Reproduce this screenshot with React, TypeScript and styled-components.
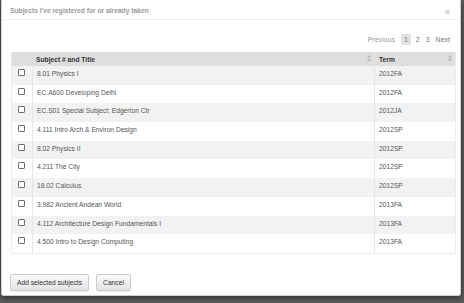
import React from "react";
import styled, { createGlobalStyle } from "styled-components";

const Global = createGlobalStyle`
  html, body { margin: 0; padding: 0; }
  body {
    background: #5c5c5c;
    font-family: "Liberation Sans", Arial, sans-serif;
    width: 464px;
    height: 303px;
    overflow: hidden;
  }
`;

const Modal = styled.div`
  box-sizing: border-box;
  margin-left: 1px;
  width: 460px;
  height: 296px;
  background: #fff;
  border: 1px solid #cfcfcf;
  border-top: none;
  border-radius: 0 0 3px 3px;
  box-shadow: 0 2px 6px rgba(0, 0, 0, 0.5);
  display: flex;
  flex-direction: column;
`;

const Header = styled.div`
  box-sizing: border-box;
  height: 20px;
  padding: 1px 9px 0 8px;
  display: flex;
  align-items: center;
  justify-content: space-between;
  border-bottom: 1px solid #f0f0f0;
`;

const Title = styled.h4`
  margin: 0;
  font-size: 6.7px;
  font-weight: bold;
  color: #9a9a9a;
`;

const Close = styled.span`
  font-size: 9px;
  color: #c4c4c4;
  font-weight: bold;
  margin-top: 4px;
  margin-right: 1px;
`;

const Body = styled.div`
  flex: 1;
  padding: 13px 7px 0 9px;
  display: flex;
  flex-direction: column;
`;

const Pager = styled.div`
  display: flex;
  justify-content: flex-end;
  align-items: center;
  height: 12px;
  padding-right: 0px;
  margin-bottom: 7px;
  font-size: 7px;
`;

const PageLink = styled.span<{ $active?: boolean; $muted?: boolean }>`
  padding: 2px 3px;
  margin-left: ${(p) => (p.$active ? "3px" : "0")};
  margin-right: ${(p) => (p.$active ? "2px" : "0")};
  background: ${(p) => (p.$active ? "#e2e2e2" : "transparent")};
  color: ${(p) => (p.$muted ? "#9a9a9a" : "#777")};
  border-radius: 1px;
`;

const Table = styled.div`
  width: 443px;
  border: 1px solid #ececec;
  border-top: none;
`;

const Row = styled.div<{ $striped?: boolean; $head?: boolean }>`
  display: grid;
  grid-template-columns: 20px 342px 1fr;
  height: ${(p) => (p.$head ? "14px" : "18.7px")};
  background: ${(p) => (p.$head ? "#dedede" : p.$striped ? "#f2f2f2" : "#fff")};
  font-size: 6.7px;
  color: ${(p) => (p.$head ? "#333" : "#555")};
  font-weight: ${(p) => (p.$head ? "bold" : "normal")};
`;

const Cell = styled.div<{ $divider?: boolean }>`
  box-sizing: border-box;
  border-left: ${(p) => (p.$divider ? "1px solid #e6e6e6" : "none")};
  padding: 3px 4px 0 4px;
  line-height: 9px;
  display: flex;
  align-items: flex-start;
  justify-content: space-between;
  white-space: nowrap;
`;

const CheckCell = styled.div`
  display: flex;
  justify-content: center;
  padding-top: 3px;
  padding-right: 2px;
  box-sizing: border-box;
`;

const Box = styled.span`
  box-sizing: border-box;
  width: 7px;
  height: 7px;
  border: 1px solid #6f6f6f;
  border-radius: 1px;
  background: #fff;
`;

const Sort = styled.svg`
  width: 4px;
  height: 7px;
  margin-right: -1px;
`;

const SortIcon = () => (
  <Sort viewBox="0 0 4 7">
    <path d="M0 3 L2 0 L4 3 Z" fill="#bcbcbc" />
    <path d="M0 4 L2 7 L4 4 Z" fill="#bcbcbc" />
  </Sort>
);

const Footer = styled.div`
  display: flex;
  gap: 7px;
  padding: 0 0 4px 8px;
`;

const Button = styled.button`
  font-family: "Liberation Sans", Arial, sans-serif;
  font-size: 6.7px;
  color: #333;
  height: 17px;
  padding: 0 6px;
  border: 1px solid #cdcdcd;
  border-radius: 2px;
  background: linear-gradient(#fafafa, #e4e4e4);
  box-shadow: 0 1px 1px rgba(0, 0, 0, 0.08);
`;

const subjects: [string, string][] = [
  ["8.01 Physics I", "2012FA"],
  ["EC.A600 Developing Delhi", "2012FA"],
  ["EC.S01 Special Subject: Edgerton Ctr", "2012JA"],
  ["4.111 Intro Arch & Environ Design", "2012SP"],
  ["8.02 Physics II", "2012SP"],
  ["4.211 The City", "2012SP"],
  ["18.02 Calculus", "2012SP"],
  ["3.982 Ancient Andean World", "2013FA"],
  ["4.112 Architecture Design Fundamentals I", "2013FA"],
  ["4.500 Intro to Design Computing", "2013FA"],
];

export default function App() {
  return (
    <>
      <Global />
      <Modal>
        <Header>
          <Title>Subjects I've registered for or already taken</Title>
          <Close>×</Close>
        </Header>
        <Body>
          <Pager>
            <PageLink $muted>Previous</PageLink>
            <PageLink $active>1</PageLink>
            <PageLink>2</PageLink>
            <PageLink>3</PageLink>
            <PageLink>Next</PageLink>
          </Pager>
          <Table>
            <Row $head>
              <Cell />
              <Cell>
                <span>Subject # and Title</span>
                <SortIcon />
              </Cell>
              <Cell $divider>
                <span>Term</span>
                <SortIcon />
              </Cell>
            </Row>
            {subjects.map(([title, term], i) => (
              <Row key={title} $striped={i % 2 === 0}>
                <CheckCell>
                  <Box />
                </CheckCell>
                <Cell $divider>{title}</Cell>
                <Cell $divider>{term}</Cell>
              </Row>
            ))}
          </Table>
        </Body>
        <Footer>
          <Button>Add selected subjects</Button>
          <Button>Cancel</Button>
        </Footer>
      </Modal>
    </>
  );
}
